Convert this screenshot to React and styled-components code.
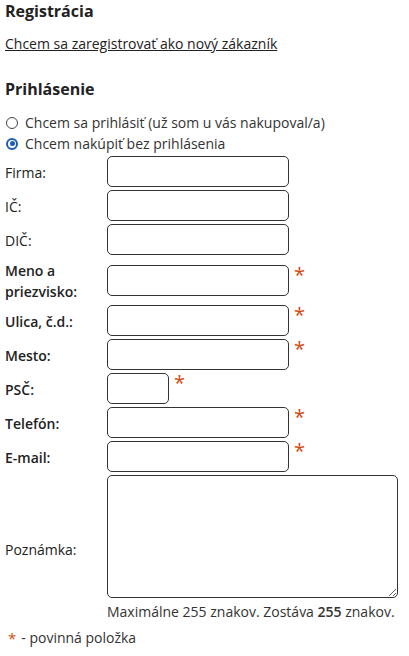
import styled, { createGlobalStyle } from "styled-components";

const GlobalStyle = createGlobalStyle`
  body {
    margin: 0;
    background: #fff;
    font-family: "Open Sans", "Liberation Sans", sans-serif;
    color: #333;
  }
`;

const Page = styled.div`
  width: 409px;
  padding: 0 5px;
  box-sizing: border-box;
`;

const Heading = styled.h2`
  margin: 0;
  font-size: 16px;
  line-height: 22px;
  font-weight: 700;
  color: #222;
`;

const RegLink = styled.a`
  display: block;
  margin: 12px 0 24px;
  font-size: 14px;
  line-height: 20px;
  color: #222;
  text-decoration: underline;
`;

const RadioList = styled.div`
  margin-top: 12px;
  display: flex;
  flex-direction: column;
`;

const RadioRow = styled.label`
  display: flex;
  align-items: center;
  gap: 7px;
  font-size: 14px;
  line-height: 21px;
  color: #333;
`;

const Radio = styled.span`
  width: 12px;
  height: 12px;
  box-sizing: border-box;
  border-radius: 50%;
  border: ${(p) => (p.$checked ? "2px solid #1a5fb4" : "1px solid #444")};
  display: flex;
  align-items: center;
  justify-content: center;
  margin-left: 1px;
  &::after {
    content: "";
    display: ${(p) => (p.$checked ? "block" : "none")};
    width: 5px;
    height: 5px;
    border-radius: 50%;
    background: #1a5fb4;
  }
`;

const Form = styled.div`
  margin-top: 2px;
  display: flex;
  flex-direction: column;
  gap: 3px;
`;

const Row = styled.div`
  display: grid;
  grid-template-columns: 102px 1fr;
  align-items: center;
`;

const Label = styled.div`
  font-size: 14px;
  line-height: 21px;
  padding-top: 2px;
  font-weight: ${(p) => (p.$required ? 600 : 400)};
  color: #222;
`;

const Field = styled.div`
  display: flex;
  align-items: flex-start;
`;

const Input = styled.input`
  width: ${(p) => p.$width || 182}px;
  height: 31px;
  box-sizing: border-box;
  border: 1px solid #333;
  border-radius: 5px;
  background: #fff;
  padding: 0 6px;
  font: inherit;
  font-size: 14px;
`;

const Star = styled.span`
  color: #d34a10;
  font-size: ${(p) => (p.$small ? 15 : 20)}px;
  line-height: 1;
  margin-left: ${(p) => (p.$small ? 0 : 5)}px;
`;

const NoteCell = styled.div`
  display: flex;
  flex-direction: column;
`;

const TextArea = styled.textarea`
  display: block;
  width: 291px;
  height: 123px;
  box-sizing: border-box;
  border: 1px solid #333;
  border-radius: 5px;
  resize: both;
  font: inherit;
`;

const Hint = styled.div`
  margin-top: 4px;
  font-size: 14px;
  line-height: 20px;
  color: #333;
  b {
    font-weight: 600;
  }
`;

const Legend = styled.div`
  margin-top: 6px;
  display: flex;
  align-items: center;
  gap: 5px;
  font-size: 14px;
  line-height: 20px;
  color: #333;
  padding-left: 3px;
`;

const fields = [
  { label: "Firma:" },
  { label: "IČ:" },
  { label: "DIČ:" },
  { label: "Meno a priezvisko:", required: true },
  { label: "Ulica, č.d.:", required: true },
  { label: "Mesto:", required: true },
  { label: "PSČ:", required: true, width: 62 },
  { label: "Telefón:", required: true },
  { label: "E-mail:", required: true },
];

export default function App() {
  return (
    <Page>
      <GlobalStyle />
      <Heading>Registrácia</Heading>
      <RegLink href="#">Chcem sa zaregistrovať ako nový zákazník</RegLink>
      <Heading>Prihlásenie</Heading>
      <RadioList>
        <RadioRow>
          <Radio />
          Chcem sa prihlásiť (už som u vás nakupoval/a)
        </RadioRow>
        <RadioRow>
          <Radio $checked />
          Chcem nakúpiť bez prihlásenia
        </RadioRow>
      </RadioList>
      <Form>
        {fields.map((f) => (
          <Row key={f.label}>
            <Label $required={f.required}>{f.label}</Label>
            <Field>
              <Input $width={f.width} />
              {f.required && <Star>*</Star>}
            </Field>
          </Row>
        ))}
        <Row>
          <Label>Poznámka:</Label>
          <NoteCell>
            <TextArea />
            <Hint>
              Maximálne 255 znakov. Zostáva <b>255</b> znakov.
            </Hint>
          </NoteCell>
        </Row>
      </Form>
      <Legend>
        <Star $small>*</Star>- povinná položka
      </Legend>
    </Page>
  );
}
